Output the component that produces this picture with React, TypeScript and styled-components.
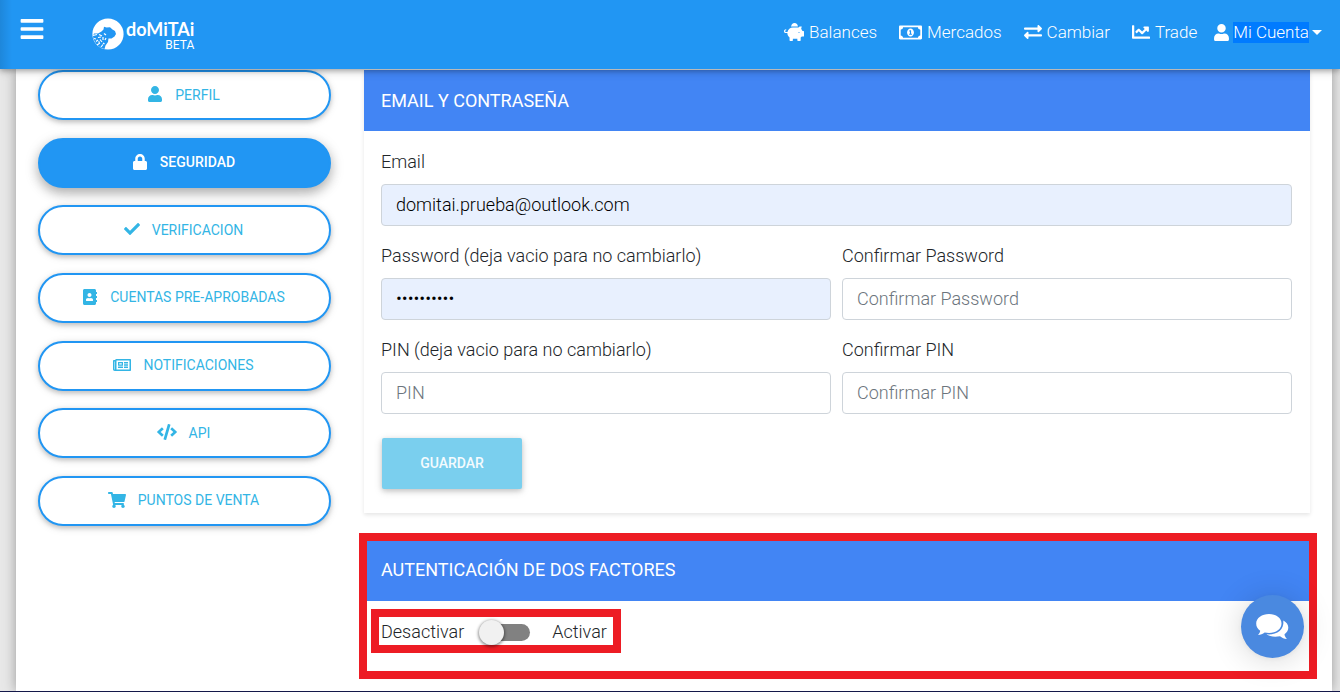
import React, { useState } from "react";
import styled, { createGlobalStyle, css } from "styled-components";
import {
  FaPiggyBank,
  FaRegMoneyBillAlt,
  FaExchangeAlt,
  FaChartLine,
  FaUser,
  FaLock,
  FaCheck,
  FaAddressBook,
  FaRegNewspaper,
  FaCode,
  FaShoppingCart,
  FaBars,
} from "react-icons/fa";

const GlobalStyle = createGlobalStyle`
  *, *::before, *::after { box-sizing: border-box; }
  body {
    margin: 0;
    background: #e8e8e8;
    color: #212529;
    font: 300 18px/27px Roboto, "Liberation Sans", sans-serif;
  }
  input, button { font: inherit; }
`;

const Page = styled.div`
  display: flex;
  flex-direction: column;
  min-height: 100vh;
`;

const Header = styled.header`
  display: flex;
  align-items: center;
  justify-content: space-between;
  height: 69px;
  padding: 0 18px 5px 19px;
  position: sticky;
  top: 0;
  z-index: 2;
  background: linear-gradient(90deg, rgba(0, 0, 0, 0.1), transparent 12px) #2196f3;
  box-shadow: 0 2px 5px rgba(0, 0, 0, 0.26), 0 2px 10px rgba(0, 0, 0, 0.16);
  color: #fff;
`;

const Brand = styled.div`
  display: flex;
  align-items: center;
  gap: 47px;
`;

const MenuButton = styled.button`
  display: flex;
  padding: 0 0 7px;
  border: 0;
  background: none;
  color: #fff;
  cursor: pointer;
`;

const LogoLink = styled.a`
  display: flex;
  align-items: center;
  gap: 2px;
  padding-top: 4px;
  color: #fff;
  text-decoration: none;
`;

const Wordmark = styled.span`
  display: flex;
  flex-direction: column;
  align-items: flex-end;
  padding-top: 4px;
  font: 700 18px/18px Lato, sans-serif;
`;

const Beta = styled.small`
  font: 400 12px/14px Roboto, sans-serif;
`;

const Nav = styled.nav`
  display: flex;
  align-items: center;
  gap: 22px;
`;

const NavLink = styled.a<{ $account?: boolean }>`
  display: flex;
  align-items: center;
  gap: ${(p) => (p.$account ? 3 : 5)}px;
  margin-left: ${(p) => (p.$account ? -6 : 0)}px;
  color: #fff;
  font-size: 17px;
  text-decoration: none;
`;

const Highlight = styled.span`
  line-height: 21px;
  background: #007bff;
`;

const Caret = styled.span`
  border: 5px solid transparent;
  border-top-color: #fff;
  border-bottom: 0;
`;

const Main = styled.main`
  flex: 1;
  display: grid;
  grid-template-columns: 293px minmax(0, 1fr);
  align-items: start;
  gap: 33px;
  margin: 0 8px 0 16px;
  padding: 1px 22px 12px;
  background: #fff;
  box-shadow: 0 0 12px rgba(0, 0, 0, 0.34);
`;

const Sidebar = styled.aside`
  display: flex;
  flex-direction: column;
  justify-content: space-between;
  min-height: 456px;
`;

const SideButton = styled.button<{ $active?: boolean }>`
  display: flex;
  align-items: center;
  justify-content: center;
  gap: 12px;
  height: 50px;
  padding: 0 2px 0 0;
  border: 2px solid #2196f3;
  border-radius: 25px;
  background: #fff;
  color: #33b5e5;
  font-size: 14px;
  line-height: 21px;
  font-weight: ${(p) => (p.$active ? 500 : 400)};
  text-transform: uppercase;
  cursor: pointer;
  box-shadow: 0 2px 5px rgba(0, 0, 0, 0.2), 0 2px 10px rgba(0, 0, 0, 0.1);
  svg {
    margin-bottom: 2px;
  }
  ${(p) =>
    p.$active &&
    css`
      background: #2196f3;
      color: #fff;
      box-shadow: 0 5px 11px rgba(0, 0, 0, 0.22), 0 4px 15px rgba(0, 0, 0, 0.15);
    `}
`;

const Content = styled.div`
  display: flex;
  flex-direction: column;
  gap: 20px;
`;

const Card = styled.section`
  background: #fff;
  box-shadow: 0 2px 4px rgba(0, 0, 0, 0.1);
`;

const MarkedCard = styled.section`
  margin: 0 -7px 0 -5px;
  border: 8px solid #ed1c24;
  background: #fff;
`;

const CardTitle = styled.h2<{ $inset?: boolean }>`
  margin: 0;
  padding: ${(p) => (p.$inset ? "15px 14px 18px" : "17px")};
  background: #4285f4;
  color: #fff;
  font-size: 18px;
  line-height: 27px;
  font-weight: 400;
  text-transform: uppercase;
`;

const Form = styled.form`
  display: grid;
  grid-template-columns: 1fr 1fr;
  gap: 16px 11px;
  padding: 17px 18px 24px 17px;
`;

const Field = styled.label<{ $wide?: boolean }>`
  display: flex;
  flex-direction: column;
  gap: 9px;
  ${(p) => p.$wide && "grid-column: 1 / -1;"}
`;

const Input = styled.input<{ $filled?: boolean }>`
  width: 100%;
  height: 42px;
  padding: 0 14px 1px;
  border: 1px solid #ced4da;
  border-radius: 4px;
  background: ${(p) => (p.$filled ? "#e8f0fe" : "#fff")};
  color: #000;
  &::placeholder {
    color: #6c757d;
    opacity: 1;
  }
`;

const SaveButton = styled.button`
  justify-self: start;
  width: 140px;
  height: 51px;
  margin: 8px 0 0 1px;
  border: 0;
  border-radius: 2px;
  background: #7acfee;
  color: #f4fbfe;
  font-size: 14px;
  font-weight: 500;
  text-transform: uppercase;
  box-shadow: 0 2px 5px rgba(0, 0, 0, 0.16), 0 2px 10px rgba(0, 0, 0, 0.12);
`;

const SwitchArea = styled.div`
  display: flex;
  padding: 8px 4px 18px;
`;

const SwitchBox = styled.label`
  display: flex;
  align-items: center;
  height: 44px;
  padding: 0 6px 0 2px;
  border: 8px solid #ed1c24;
`;

const Toggle = styled.input`
  appearance: none;
  display: flex;
  align-items: center;
  width: 48px;
  height: 17px;
  margin: 3px 22px 0 18px;
  border-radius: 9px;
  background: #818181;
  cursor: pointer;
  &::before {
    content: "";
    width: 25px;
    height: 25px;
    margin-left: -3px;
    border-radius: 50%;
    background: #f1f1f1;
    box-shadow: 0 1px 3px 1px rgba(0, 0, 0, 0.4);
  }
  &:checked::before {
    margin-left: 25px;
  }
`;

const ChatButton = styled.button`
  position: fixed;
  right: 36px;
  bottom: 34px;
  z-index: 3;
  display: grid;
  place-items: center;
  width: 63px;
  height: 63px;
  padding: 0;
  border: 0;
  border-radius: 50%;
  background: #4a89e0;
  color: #fff;
  cursor: pointer;
  box-shadow: 0 1px 6px rgba(0, 0, 0, 0.06), 0 2px 32px rgba(0, 0, 0, 0.16);
`;

const BottomEdge = styled.footer`
  position: relative;
  height: 1px;
  background: #14184a;
`;

const LogoMark = () => (
  <svg width="32" height="32" viewBox="0 0 32 32" aria-hidden="true">
    <circle cx="16" cy="16" r="15.600" fill="#fff" />
    <path
      d="M2 15.500L6 15.500L9.500 13.500L11.500 11.500L12 8.800L14.500 9.500L18 9.300L20.500 11.500L23 13L24 16L22.500 18.500L19.500 20.500L16.500 20.500L16 24L13.500 27.500L12.500 31C6 29.500 1.500 24 1 18Z"
      fill="#2196f3"
    />
    <path
      d="M1 17.500l4-1M7 16.500l3 1.500M2 20.500l2 .500M6 19.500l3-.500M11 19l0 3M4 23.500l2-1.500M8 21.500l2 2.500M5 27l3-2M11 25l1.500 1M9 29l2-2.500M12 15.500l2 1.500M13 22l1-2M6.500 23.500l1 1"
      stroke="#fff"
      strokeWidth="1.200"
      fill="none"
    />
  </svg>
);

const ChatIcon = () => (
  <svg width="33" height="26" viewBox="0 0 33 26" fill="currentColor" aria-hidden="true">
    <path d="M13 0C20 0 25.500 4 25.500 9.500S20 19 13 19C11.500 19 10 18.800 8.700 18.500C6.800 20 4.500 20.800 2 21C3.200 19.800 4 18.500 4.200 16.700C1.500 15 .2 12.500 .2 9.500C.2 4 6 0 13 0Z" />
    <path d="M27.300 6.500C30.500 8.200 32.300 10.700 32.300 13.600C32.300 16.300 31 18.500 28.500 20.300C28.700 22.300 29.600 23.600 31 25C28.200 24.800 26 24 24 22.300C18.500 23.400 13.500 22.600 10.500 20.300C20 21.200 28.500 16.500 27.300 6.500Z" />
  </svg>
);

const navItems = [
  { label: "Balances", icon: <FaPiggyBank size={20} /> },
  { label: "Mercados", icon: <FaRegMoneyBillAlt size={23} /> },
  { label: "Cambiar", icon: <FaExchangeAlt size={18} /> },
  { label: "Trade", icon: <FaChartLine size={18} /> },
];

const sideItems = [
  { label: "Perfil", icon: <FaUser size={16} /> },
  { label: "Seguridad", icon: <FaLock size={16} />, active: true },
  { label: "Verificacion", icon: <FaCheck size={16} /> },
  { label: "Cuentas pre-aprobadas", icon: <FaAddressBook size={16} /> },
  { label: "Notificaciones", icon: <FaRegNewspaper size={18} /> },
  { label: "API", icon: <FaCode size={20} /> },
  { label: "Puntos de venta", icon: <FaShoppingCart size={18} /> },
];

export default function App() {
  const [email, setEmail] = useState("domitai.prueba@outlook.com");
  const [password, setPassword] = useState("contrasena");

  return (
    <Page>
      <GlobalStyle />
      <Header>
        <Brand>
          <MenuButton type="button" aria-label="Menu">
            <FaBars size={26} />
          </MenuButton>
          <LogoLink href="#">
            <LogoMark />
            <Wordmark>
              doMiTAi
              <Beta>BETA</Beta>
            </Wordmark>
          </LogoLink>
        </Brand>
        <Nav>
          {navItems.map((item) => (
            <NavLink href="#" key={item.label}>
              {item.icon}
              {item.label}
            </NavLink>
          ))}
          <NavLink href="#" $account>
            <FaUser size={17} />
            <Highlight>Mi Cuenta</Highlight>
            <Caret />
          </NavLink>
        </Nav>
      </Header>
      <Main>
        <Sidebar>
          {sideItems.map((item) => (
            <SideButton type="button" key={item.label} $active={item.active}>
              {item.icon}
              {item.label}
            </SideButton>
          ))}
        </Sidebar>
        <Content>
          <Card>
            <CardTitle>Email y contraseña</CardTitle>
            <Form onSubmit={(e) => e.preventDefault()}>
              <Field $wide>
                Email
                <Input type="email" $filled value={email} onChange={(e) => setEmail(e.target.value)} />
              </Field>
              <Field>
                Password (deja vacio para no cambiarlo)
                <Input type="password" $filled value={password} onChange={(e) => setPassword(e.target.value)} />
              </Field>
              <Field>
                Confirmar Password
                <Input type="password" placeholder="Confirmar Password" />
              </Field>
              <Field>
                PIN (deja vacio para no cambiarlo)
                <Input type="password" placeholder="PIN" />
              </Field>
              <Field>
                Confirmar PIN
                <Input type="password" placeholder="Confirmar PIN" />
              </Field>
              <SaveButton type="submit">Guardar</SaveButton>
            </Form>
          </Card>
          <MarkedCard>
            <CardTitle $inset>Autenticación de dos factores</CardTitle>
            <SwitchArea>
              <SwitchBox>
                Desactivar
                <Toggle type="checkbox" role="switch" />
                Activar
              </SwitchBox>
            </SwitchArea>
          </MarkedCard>
        </Content>
      </Main>
      <BottomEdge />
      <ChatButton type="button" aria-label="Chat">
        <ChatIcon />
      </ChatButton>
    </Page>
  );
}
